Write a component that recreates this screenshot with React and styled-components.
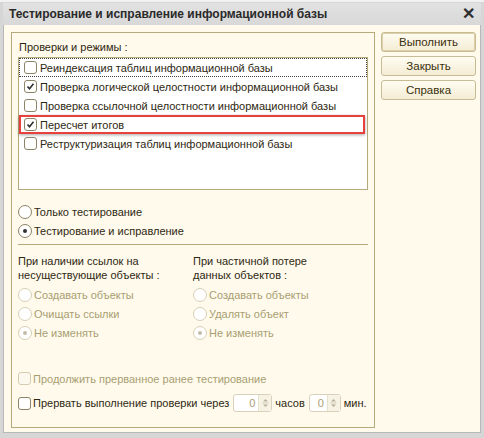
import React from 'react';
import styled, { createGlobalStyle } from 'styled-components';

const GlobalStyle = createGlobalStyle`
    html, body {
        margin: 0;
        padding: 0;
        background: #ffffff;
    }
    body {
        font-family: "Liberation Sans", Arial, sans-serif;
        font-size: 11px;
    }
`;

const Window = styled.div`
    width: 484px;
    height: 438px;
    box-sizing: border-box;
    background: #d6d6d6;
    border-top: 2px solid #f2f2f2;
    padding: 1px 3px 5px 3px;
    display: flex;
    flex-direction: column;
`;

const TitleBar = styled.div`
    height: 22px;
    display: flex;
    align-items: center;
    justify-content: space-between;
    padding: 0 6px 0 6px;
    background: linear-gradient(#e2e2e2, #d8d8d8);
    color: #2a2a2a;
    font-weight: bold;
    font-size: 12px;
`;

const CloseMark = styled.span`
    font-size: 16px;
    font-weight: bold;
    color: #303030;
    line-height: 1;
`;

const Body = styled.div`
    flex: 1;
    display: flex;
    gap: 6px;
    padding: 7px 6px 4px 7px;
    background: #fffaec;
    border-left: 1px solid #b8b8b8;
    border-right: 1px solid #b8b8b8;
    border-bottom: 1px solid #b8b8b8;
`;

const Panel = styled.div`
    width: 364px;
    box-sizing: border-box;
    border: 1px solid #b4aa7c;
    padding: 6px 6px 0 6px;
    display: flex;
    flex-direction: column;
    color: #2e2812;
`;

const Caption = styled.div`
    height: 16px;
    line-height: 16px;
    margin-bottom: 2px;
    padding-left: 1px;
`;

const ListBox = styled.div`
    width: 350px;
    height: 133px;
    box-sizing: border-box;
    background: #ffffff;
    border: 1px solid #b4aa7c;
`;

const Row = styled.div`
    position: relative;
    height: 19px;
    display: flex;
    align-items: center;
    padding-left: 4px;
    gap: 3px;
    box-sizing: border-box;
    white-space: nowrap;
    border: 1px dotted ${p => (p.focused ? '#404040' : 'transparent')};
    &::after {
        content: '';
        display: ${p => (p.marked ? 'block' : 'none')};
        position: absolute;
        left: -1px;
        right: 1px;
        top: -1px;
        bottom: -1px;
        border: 2px solid #e8403c;
        box-shadow: 0 1px 3px rgba(0, 0, 0, 0.35);
    }
`;

const Box = styled.span`
    width: 11px;
    height: 11px;
    flex: none;
    border: 1px solid ${p => (p.disabled ? '#d4ccb0' : '#8c8466')};
    border-radius: 3px;
    background: ${p => (p.disabled ? '#fbf8ee' : '#ffffff')};
    display: flex;
    align-items: center;
    justify-content: center;
`;

const RoundBox = styled.span`
    width: 12px;
    height: 12px;
    flex: none;
    border: 1px solid ${p => (p.disabled ? '#d6cfb4' : '#8c8466')};
    border-radius: 50%;
    background: #ffffff;
    display: flex;
    align-items: center;
    justify-content: center;
    &::after {
        content: '';
        display: ${p => (p.checked ? 'block' : 'none')};
        width: 4px;
        height: 4px;
        border-radius: 50%;
        background: ${p => (p.disabled ? '#c4bea8' : '#333')};
    }
`;

const Option = styled.div`
    height: 19px;
    display: flex;
    align-items: center;
    gap: 2px;
    white-space: nowrap;
    color: ${p => (p.disabled ? '#a89e72' : '#2e2812')};
`;

const Modes = styled.div`
    padding-top: 12px;
    padding-bottom: 4px;
    border-bottom: 1px solid #b4aa7c;
`;

const Columns = styled.div`
    display: flex;
    padding-top: 9px;
`;

const Column = styled.div`
    width: 179px;
    display: flex;
    flex-direction: column;
`;

const GroupTitle = styled.div`
    line-height: 14px;
    margin-bottom: 3px;
`;

const Bottom = styled.div`
    margin-top: 27px;
    display: flex;
    flex-direction: column;
    gap: 5px;
`;

const TimeRow = styled.div`
    display: flex;
    align-items: center;
    gap: 2px;
    height: 20px;
    white-space: nowrap;
`;

const Spinner = styled.div`
    width: ${p => p.width}px;
    height: 18px;
    box-sizing: border-box;
    display: flex;
    border: 1px solid #d8d2bc;
    border-radius: 3px;
    background: #ffffff;
    margin: 0 1px 0 2px;
`;

const SpinValue = styled.div`
    flex: 1;
    text-align: right;
    padding-right: 3px;
    line-height: 16px;
    color: #a89e72;
`;

const SpinArrows = styled.div`
    width: 12px;
    border-left: 1px solid #e6e0cc;
    background: #f6f2e4;
    display: flex;
    align-items: center;
    justify-content: center;
`;

const ButtonColumn = styled.div`
    display: flex;
    flex-direction: column;
    gap: 4px;
`;

const Button = styled.button`
    width: 95px;
    height: 20px;
    padding: 0;
    font-family: inherit;
    font-size: 11.5px;
    color: #3a300c;
    background: linear-gradient(#fffcf2, #f4ecd4);
    border: 1px solid #c8bc94;
    border-radius: 3px;
    box-shadow: ${p => (p.primary ? 'inset 0 0 0 1px #ddd0a8' : 'none')};
`;

function Check({ checked, disabled }) {
    return (
        <Box disabled={disabled}>
            {checked && (
                <svg width="9" height="9" viewBox="0 0 9 9">
                    <path d="M1.5 4.5 L3.5 6.8 L7.5 1.8" fill="none" stroke="#2e2e2e" strokeWidth="1.6" />
                </svg>
            )}
        </Box>
    );
}

function Arrows() {
    return (
        <SpinArrows>
            <svg width="7" height="12" viewBox="0 0 7 12">
                <path d="M1 4.5 L3.5 2 L6 4.5 Z" fill="#b8b09a" />
                <path d="M1 7.5 L3.5 10 L6 7.5 Z" fill="#b8b09a" />
                <line x1="0.5" y1="6" x2="6.5" y2="6" stroke="#d6d0bc" />
            </svg>
        </SpinArrows>
    );
}

const checks = [
    { text: 'Реиндексация таблиц информационной базы', checked: false, focused: true },
    { text: 'Проверка логической целостности информационной базы', checked: true },
    { text: 'Проверка ссылочной целостности информационной базы', checked: false },
    { text: 'Пересчет итогов', checked: true, marked: true },
    { text: 'Реструктуризация таблиц информационной базы', checked: false },
];

export default function App() {
    return (
        <>
            <GlobalStyle />
            <Window>
                <TitleBar>
                    <span>Тестирование и исправление информационной базы</span>
                    <CloseMark>✕</CloseMark>
                </TitleBar>
                <Body>
                    <Panel>
                        <Caption>Проверки и режимы :</Caption>
                        <ListBox>
                            {checks.map(c => (
                                <Row key={c.text} focused={c.focused} marked={c.marked}>
                                    <Check checked={c.checked} />
                                    <span>{c.text}</span>
                                </Row>
                            ))}
                        </ListBox>
                        <Modes>
                            <Option>
                                <RoundBox />
                                <span>Только тестирование</span>
                            </Option>
                            <Option>
                                <RoundBox checked />
                                <span>Тестирование и исправление</span>
                            </Option>
                        </Modes>
                        <Columns>
                            <Column>
                                <GroupTitle>При наличии ссылок на<br />несуществующие объекты :</GroupTitle>
                                <Option disabled><RoundBox disabled /><span>Создавать объекты</span></Option>
                                <Option disabled><RoundBox disabled /><span>Очищать ссылки</span></Option>
                                <Option disabled><RoundBox disabled checked /><span>Не изменять</span></Option>
                            </Column>
                            <Column>
                                <GroupTitle>При частичной потере<br />данных объектов :</GroupTitle>
                                <Option disabled><RoundBox disabled /><span>Создавать объекты</span></Option>
                                <Option disabled><RoundBox disabled /><span>Удалять объект</span></Option>
                                <Option disabled><RoundBox disabled checked /><span>Не изменять</span></Option>
                            </Column>
                        </Columns>
                        <Bottom>
                            <Option disabled>
                                <Check disabled />
                                <span>Продолжить прерванное ранее тестирование</span>
                            </Option>
                            <TimeRow>
                                <Check />
                                <span>Прервать выполнение проверки через</span>
                                <Spinner width={39}>
                                    <SpinValue>0</SpinValue>
                                    <Arrows />
                                </Spinner>
                                <span>часов</span>
                                <Spinner width={32}>
                                    <SpinValue>0</SpinValue>
                                    <Arrows />
                                </Spinner>
                                <span>мин.</span>
                            </TimeRow>
                        </Bottom>
                    </Panel>
                    <ButtonColumn>
                        <Button primary>Выполнить</Button>
                        <Button>Закрыть</Button>
                        <Button>Справка</Button>
                    </ButtonColumn>
                </Body>
            </Window>
        </>
    );
}
